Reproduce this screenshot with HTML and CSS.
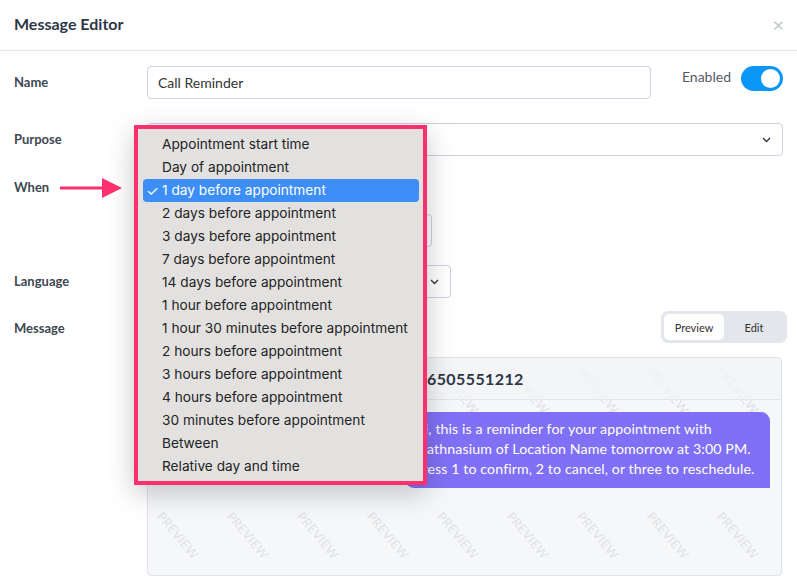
FILE: index.html
```html
<!DOCTYPE html>
<html lang="en">
<head>
<meta charset="utf-8">
<title>Message Editor</title>
<link rel="stylesheet" href="styles.css">
</head>
<body>
<div class="modal">
  <header class="modal-head">
    <h1 class="modal-title">Message Editor</h1>
    <span class="modal-close">×</span>
  </header>

  <div class="modal-body">
    <div class="field field-name">
      <label class="field-label">Name</label>
      <div class="field-control name-control">
        <div class="text-input name-input">Call Reminder</div>
        <div class="enabled">
          <span class="enabled-text">Enabled</span>
          <span class="switch"><span class="switch-knob"></span></span>
        </div>
      </div>
    </div>

    <div class="field field-purpose">
      <label class="field-label">Purpose</label>
      <div class="field-control">
        <div class="select select-full">
          <span class="select-value"></span>
          <svg class="chevron" width="9" height="6" viewBox="0 0 9 6"><path d="M1 1l3.5 3.5L8 1" fill="none" stroke="#333" stroke-width="1.3"/></svg>
        </div>
      </div>
    </div>

    <div class="field field-when">
      <label class="field-label">When</label>
      <div class="field-control when-stack">
        <div class="select select-when">
          <span class="select-value"></span>
          <svg class="chevron" width="9" height="6" viewBox="0 0 9 6"><path d="M1 1l3.5 3.5L8 1" fill="none" stroke="#333" stroke-width="1.3"/></svg>
        </div>
        <div class="text-input time-input"></div>
      </div>
    </div>

    <div class="field field-language">
      <label class="field-label">Language</label>
      <div class="field-control">
        <div class="select select-language">
          <span class="select-value"></span>
          <svg class="chevron" width="9" height="6" viewBox="0 0 9 6"><path d="M1 1l3.5 3.5L8 1" fill="none" stroke="#333" stroke-width="1.3"/></svg>
        </div>
      </div>
    </div>

    <div class="field field-message">
      <label class="field-label">Message</label>
      <div class="field-control message-control">
        <div class="tabs">
          <span class="tab tab-active">Preview</span>
          <span class="tab">Edit</span>
        </div>
        <div class="preview">
          <div class="watermark" aria-hidden="true">
            <span>PREVIEW</span><span>PREVIEW</span><span>PREVIEW</span><span>PREVIEW</span><span>PREVIEW</span><span>PREVIEW</span><span>PREVIEW</span><span>PREVIEW</span><span>PREVIEW</span>
            <span>PREVIEW</span><span>PREVIEW</span><span>PREVIEW</span><span>PREVIEW</span><span>PREVIEW</span><span>PREVIEW</span><span>PREVIEW</span><span>PREVIEW</span><span>PREVIEW</span>
          </div>
          <div class="preview-head"><span class="preview-number">6505551212</span></div>
          <div class="preview-body">
            <div class="bubble">Hi, this is a reminder for your appointment with<br>Mathnasium of Location Name tomorrow at 3:00 PM.<br>Press 1 to confirm, 2 to cancel, or three to reschedule.</div>
          </div>
        </div>
      </div>
    </div>
  </div>
</div>

<!-- open "When" popup menu -->
<div class="popup">
  <ul class="popup-list">
    <li class="popup-item">Appointment start time</li>
    <li class="popup-item">Day of appointment</li>
    <li class="popup-item popup-item-selected"><span class="check">✓</span>1 day before appointment</li>
    <li class="popup-item">2 days before appointment</li>
    <li class="popup-item">3 days before appointment</li>
    <li class="popup-item">7 days before appointment</li>
    <li class="popup-item">14 days before appointment</li>
    <li class="popup-item">1 hour before appointment</li>
    <li class="popup-item">1 hour 30 minutes before appointment</li>
    <li class="popup-item">2 hours before appointment</li>
    <li class="popup-item">3 hours before appointment</li>
    <li class="popup-item">4 hours before appointment</li>
    <li class="popup-item">30 minutes before appointment</li>
    <li class="popup-item">Between</li>
    <li class="popup-item">Relative day and time</li>
  </ul>
</div>

<svg class="pointer-arrow" width="62" height="20" viewBox="0 0 62 20">
  <path d="M0 10H44" stroke="#fe2f6d" stroke-width="3"/>
  <path d="M42 0L62 10L42 20Z" fill="#fe2f6d"/>
</svg>
</body>
</html>
```

FILE: styles.css
```css
* { box-sizing: border-box; }

html, body {
  margin: 0;
  padding: 0;
  background: #fff;
}

body {
  width: 797px;
  height: 581px;
  overflow: hidden;
  position: relative;
  font-family: Lato, "Open Sans", sans-serif;
  color: #3d4852;
}

/* ---------- modal frame ---------- */
.modal-head {
  height: 51px;
  border-bottom: 1px solid #e4e6ea;
  display: flex;
  align-items: center;
  justify-content: space-between;
  padding: 0 14px 3px 14px;
}

.modal-title {
  margin: 0;
  font-size: 16px;
  font-weight: 700;
  color: #2d3748;
}

.modal-close {
  font-size: 20px;
  color: #c2c5ca;
  line-height: 1;
  margin-right: -1px;
}

.modal-body {
  padding: 15px 14px 0 14px;
}

/* ---------- form rows ---------- */
.field {
  display: grid;
  grid-template-columns: 133px 1fr;
  align-items: start;
}

.field-label {
  font-size: 13px;
  font-weight: 700;
  color: #3d4852;
  height: 33px;
  line-height: 33px;
}

.field-name { margin-bottom: 24px; }
.field-purpose { margin-bottom: 15px; }
.field-when { margin-bottom: 18px; }
.field-language { margin-bottom: 14px; }

.text-input,
.select {
  height: 33px;
  border: 1px solid #c8d2df;
  border-radius: 4px;
  background: #fff;
  font-size: 14px;
  color: #333;
  display: flex;
  align-items: center;
  padding: 0 10px;
}

.name-control {
  display: flex;
  align-items: flex-start;
}

.name-input { flex: 1; }

.enabled {
  display: flex;
  align-items: center;
  margin-left: 31px;
  gap: 10px;
}

.enabled-text {
  font-size: 14px;
  color: #555b63;
  margin-top: -4px;
}

.switch {
  width: 42px;
  height: 25px;
  border-radius: 13px;
  background: #0a97f7;
  display: flex;
  align-items: center;
  justify-content: flex-end;
  padding-right: 3px;
}

.switch-knob {
  width: 19px;
  height: 19px;
  border-radius: 50%;
  background: #fff;
}

.select {
  justify-content: space-between;
  padding-right: 11px;
}

.chevron { flex: none; }

.when-stack {
  display: flex;
  flex-direction: column;
  gap: 10px;
}

.select-when { width: 272px; }
.time-input { width: 285px; }
.select-language { width: 304px; }

/* ---------- message preview ---------- */
.message-control {
  display: flex;
  flex-direction: column;
}

.tabs {
  align-self: flex-end;
  margin-right: -4px;
  margin-top: -1px;
  width: 126px;
  height: 32px;
  border-radius: 7px;
  background: #e3e6ea;
  padding: 3px;
  display: flex;
  font-size: 11px;
  color: #333;
}

.tab {
  flex: 1;
  display: flex;
  align-items: center;
  justify-content: center;
}

.tab-active {
  flex: none;
  width: 60px;
  background: #fff;
  border-radius: 5px;
}

.preview {
  position: relative;
  overflow: hidden;
  margin-top: 14px;
  margin-right: 1px;
  height: 219px;
  border: 1px solid #dfe3e8;
  border-radius: 4px;
  background: #f6f7f9;
}

.watermark {
  position: absolute;
  left: -5px;
  top: -40px;
  display: grid;
  grid-template-columns: repeat(9, 70px);
  grid-auto-rows: 145px;
  pointer-events: none;
}

.watermark span {
  display: flex;
  align-items: center;
  justify-content: center;
  transform: rotate(50deg);
  font-size: 12.5px;
  color: #e0e2e6;
  letter-spacing: 0.3px;
}

.preview-head {
  position: relative;
  height: 42px;
  border-bottom: 1px solid #e2e5e9;
  background: rgba(243, 244, 246, 0.8);
  display: flex;
  align-items: center;
  padding-left: 279px;
  font-size: 16px;
  letter-spacing: 0.4px;
  font-weight: 700;
  color: #2d3748;
}

.preview-body {
  position: relative;
  display: flex;
  justify-content: flex-end;
  padding: 12px 11px 0 0;
}

.bubble {
  width: 365px;
  background: #8070f6;
  color: #fff;
  font-size: 14.2px;
  line-height: 20px;
  letter-spacing: 0.1px;
  white-space: nowrap;
  padding: 7px 9px 9px 9px;
  border-radius: 9px 9px 0 9px;
}

/* ---------- popup menu ---------- */
.popup {
  position: absolute;
  left: 134px;
  top: 125px;
  width: 293px;
  height: 360px;
  border: 4px solid #fe2f6d;
  background: #e2e1e0;
  box-shadow: 0 8px 26px rgba(0, 0, 0, 0.22);
}

.popup-list {
  list-style: none;
  margin: 0;
  padding: 4px 4px 0 5px;
  font-family: Inter, "Liberation Sans", sans-serif;
  font-size: 13.7px;
  color: #232323;
}

.popup-item {
  position: relative;
  height: 23px;
  line-height: 23px;
  padding-left: 19px;
  border-radius: 4px;
  white-space: nowrap;
}

.popup-item-selected {
  background: #3d8ef6;
  color: #fff;
}

.check {
  position: absolute;
  left: 3px;
  top: 0;
  font-size: 14.5px;
}

.pointer-arrow {
  position: absolute;
  left: 60px;
  top: 178px;
}
```
